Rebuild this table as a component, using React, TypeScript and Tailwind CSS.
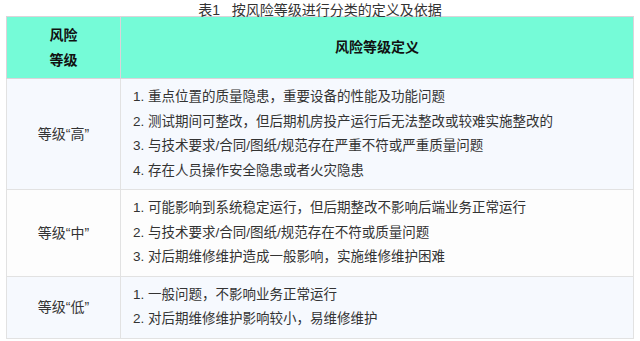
const rows = [
  {
    level: "等级“高”",
    bg: "bg-[#f6f9fe]",
    items: [
      "1. 重点位置的质量隐患，重要设备的性能及功能问题",
      "2. 测试期间可整改，但后期机房投产运行后无法整改或较难实施整改的",
      "3. 与技术要求/合同/图纸/规范存在严重不符或严重质量问题",
      "4. 存在人员操作安全隐患或者火灾隐患",
    ],
  },
  {
    level: "等级“中”",
    bg: "bg-[#fdfdfd]",
    items: [
      "1. 可能影响到系统稳定运行，但后期整改不影响后端业务正常运行",
      "2. 与技术要求/合同/图纸/规范存在不符或质量问题",
      "3. 对后期维修维护造成一般影响，实施维修维护困难",
    ],
  },
  {
    level: "等级“低”",
    bg: "bg-[#f6f9fe]",
    items: ["1. 一般问题，不影响业务正常运行", "2. 对后期维修维护影响较小，易维修维护"],
  },
];

export default function App() {
  return (
    <div className="w-[640px] h-[341px] bg-white text-[#333] font-['Liberation_Sans','Noto_Sans_CJK_SC',sans-serif]">
      <div className="h-[16px] pt-[2px] text-center text-[14px] leading-[16px]">表1&nbsp;&nbsp;&nbsp;按风险等级进行分类的定义及依据</div>
      <table className="ml-[6px] w-[628px] border-collapse text-[14px] leading-[24.5px]">
        <thead>
          <tr className="bg-[#75fbd7] text-[#111] font-bold">
            <th className="w-[114px] border border-[#dcd3d9] py-[6px] text-center">
              风险
              <br />
              等级
            </th>
            <th className="border border-[#dcd3d9] py-[6px] text-center">风险等级定义</th>
          </tr>
        </thead>
        <tbody>
          {rows.map((r) => (
            <tr key={r.level} className={r.bg}>
              <td className="border border-[#e2e2e2] text-center align-middle">{r.level}</td>
              <td className="border border-[#e2e2e2] py-[6px] pl-[12px] text-[13.5px]">
                {r.items.map((t) => (
                  <div key={t}>{t}</div>
                ))}
              </td>
            </tr>
          ))}
        </tbody>
      </table>
    </div>
  );
}
